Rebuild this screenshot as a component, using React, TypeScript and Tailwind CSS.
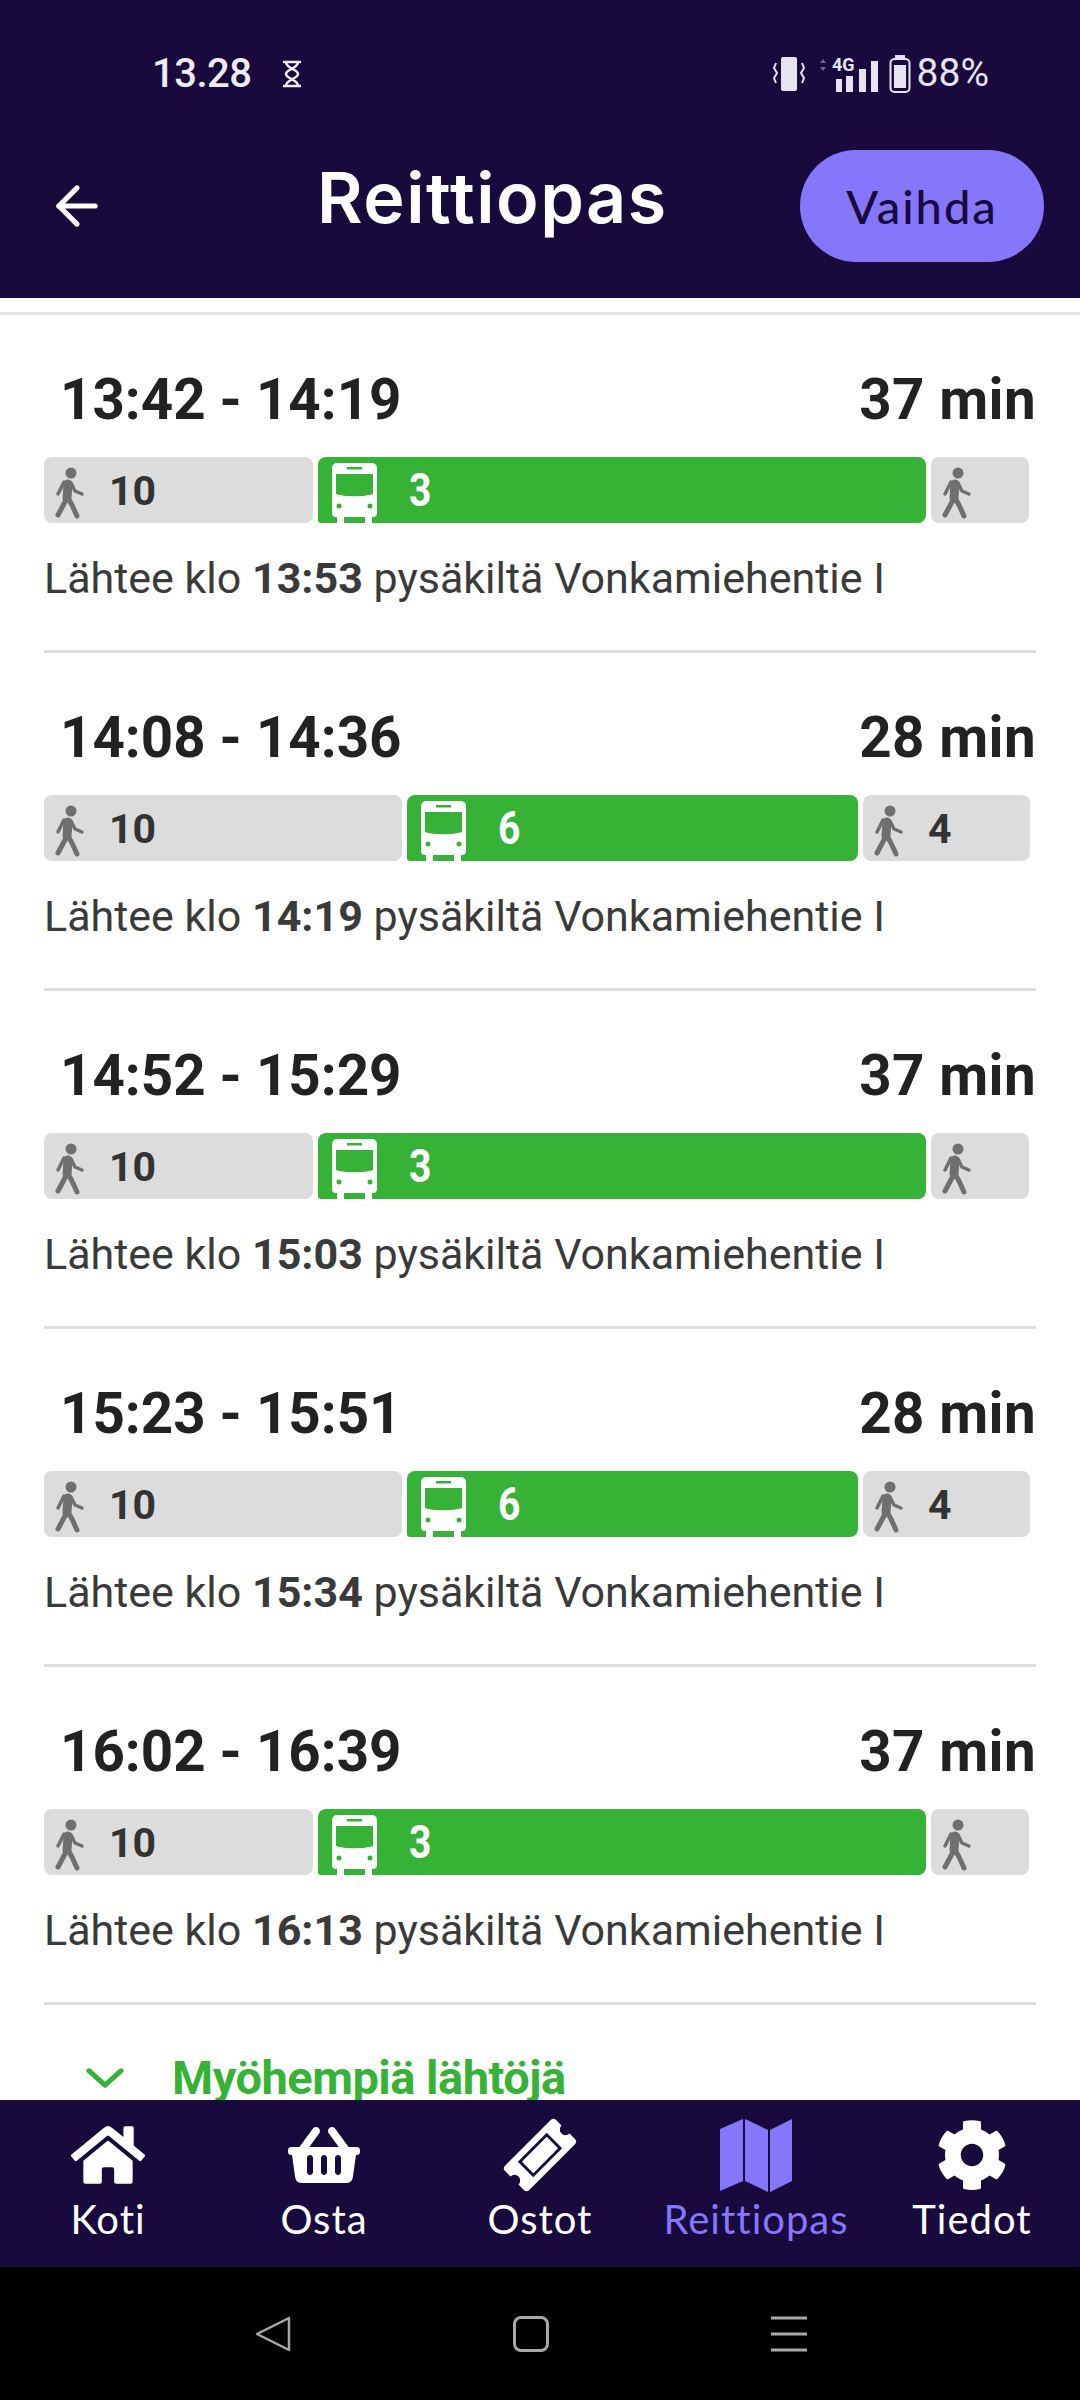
import React from "react";
import { ArrowLeft, ChevronDown } from "lucide-react";
import { FaHome, FaShoppingBasket, FaCog } from "react-icons/fa";

const routes = [
  { time: "13:42 - 14:19", dur: "37 min", dep: "13:53", line: "3", walkA: 269, bus: 608, walkB: 98, end: "" },
  { time: "14:08 - 14:36", dur: "28 min", dep: "14:19", line: "6", walkA: 358, bus: 451, walkB: 167, end: "4" },
  { time: "14:52 - 15:29", dur: "37 min", dep: "15:03", line: "3", walkA: 269, bus: 608, walkB: 98, end: "" },
  { time: "15:23 - 15:51", dur: "28 min", dep: "15:34", line: "6", walkA: 358, bus: 451, walkB: 167, end: "4" },
  { time: "16:02 - 16:39", dur: "37 min", dep: "16:13", line: "3", walkA: 269, bus: 608, walkB: 98, end: "" },
];

const BusIcon = () => (
  <svg viewBox="0 0 45 60" className="w-[45px] h-[60px] shrink-0" fill="none">
    <path d="M5 0h35a5 5 0 0 1 5 5v45a4 4 0 0 1-4 4h-1v6h-7v-6H12v6H5v-6H4a4 4 0 0 1-4-4V5a5 5 0 0 1 5-5z" fill="#fff" />
    <path d="M4 11h37v20c-8 3-29 3-37 0z" fill="#36b337" />
    <rect x="15" y="4" width="15" height="2.5" fill="#36b337" />
    <circle cx="7" cy="43" r="2.5" fill="#36b337" />
    <circle cx="38" cy="43" r="2.5" fill="#36b337" />
  </svg>
);

const WalkIcon = () => (
  <svg viewBox="0 0 60 66" className="w-[60px] h-[66px] shrink-0" fill="none" stroke="#6f6f6f" strokeLinecap="round" strokeLinejoin="round">
    <circle cx="27" cy="16" r="5.5" fill="#6f6f6f" stroke="none" />
    <path d="M24 27L23 41" strokeWidth="9" />
    <path d="M20 25L14 37" strokeWidth="3.5" />
    <path d="M27 26L31 34L38 37" strokeWidth="3.5" />
    <path d="M22 43L14 58" strokeWidth="5" />
    <path d="M24 41L28 48L33 59" strokeWidth="5" />
  </svg>
);

const TicketIcon = () => (
  <svg viewBox="0 0 80 80" className="w-[76px] h-[76px]">
    <g transform="rotate(-45 40 40)">
      <path
        d="M2 26a4 4 0 0 1 4-4h68a4 4 0 0 1 4 4v8a6 6 0 0 0 0 12v8a4 4 0 0 1-4 4H6a4 4 0 0 1-4-4v-8a6 6 0 0 0 0-12z"
        fill="#fff"
      />
      <rect x="20" y="30" width="40" height="20" fill="#fff" stroke="#180a3d" strokeWidth="3" />
    </g>
  </svg>
);

const MapIcon = () => (
  <svg viewBox="0 0 72 73" className="w-[72px] h-[73px]" fill="#8676fc">
    <path d="M0 10L23 0V62L0 72z" />
    <path d="M25 0L48 11V73L25 62z" />
    <path d="M50 11L72 0V62L50 73z" />
  </svg>
);

const WalkSegment = ({ width, label }: { width: number; label: string }) => (
  <div
    className="h-[66px] rounded-[8px] bg-[#dcdcdc] flex items-center text-[#333333] text-[41px] font-bold"
    style={{ width }}
  >
    <WalkIcon />
    {label && <span className="ml-[5px] mt-[3px] leading-none">{label}</span>}
  </div>
);

const RouteRow = ({ route }: { route: (typeof routes)[number] }) => (
  <div className="mx-[44px] pt-[51px] pb-[49px] border-b-[3px] border-[#dedede] h-[338px]">
    <div className="flex justify-between items-center h-[68px] pl-[16px] text-[56.5px] leading-[68px] font-bold text-[#222222]">
      <span>{route.time}</span>
      <span className="tracking-[0.4px]">{route.dur}</span>
    </div>
    <div className="flex gap-[5px] mt-[23px]">
      <WalkSegment width={route.walkA} label="10" />
      <div
        className="h-[66px] rounded-[8px] rounded-bl-[3px] bg-[#36b337] flex items-end pl-[14px] overflow-hidden"
        style={{ width: route.bus }}
      >
        <BusIcon />
        <span className="ml-[30px] self-center text-white text-[46px] leading-none font-bold scale-x-[0.85] -mt-[1px]">
          {route.line}
        </span>
      </div>
      <WalkSegment width={route.walkB} label={route.end} />
    </div>
    <p className="mt-[31px] text-[43px] leading-[48px] text-[#3a3a3a] whitespace-nowrap">
      Lähtee klo <b className="font-bold">{route.dep}</b> pysäkiltä Vonkamiehentie I
    </p>
  </div>
);

const navItems = [
  { label: "Koti", icon: <FaHome className="w-[74px] h-[66px]" /> },
  { label: "Osta", icon: <FaShoppingBasket className="w-[72px] h-[64px]" /> },
  { label: "Ostot", icon: <TicketIcon /> },
  { label: "Reittiopas", icon: <MapIcon />, active: true },
  { label: "Tiedot", icon: <FaCog className="w-[72px] h-[72px]" /> },
];

export default function App() {
  return (
    <div className="w-[1080px] h-[2400px] flex flex-col overflow-hidden bg-white font-['Roboto',sans-serif]">
      <header className="h-[298px] shrink-0 bg-[#180a3d] text-white flex flex-col">
        <div className="h-[147px] flex items-center justify-between pl-[152px] pr-[91px]">
          <div className="flex items-center gap-[29px] text-[#ececf2] text-[40px]">
            <span className="font-medium tracking-[-0.5px]">13.28</span>
            <svg viewBox="0 0 22 28" className="w-[22px] h-[28px]" fill="none" stroke="#ececf2" strokeWidth="2.5">
              <path d="M2 2h18M2 26h18M5 2c0 7 12 7 12 12S5 19 5 26h12c0-7-12-7-12-12S17 9 17 2z" />
            </svg>
          </div>
          <div className="flex items-center text-[#e6e4f0]">
            <svg viewBox="0 0 32 34" className="w-[32px] h-[34px]">
              <rect x="8" y="0" width="16" height="34" rx="2" fill="#e6e4f0" />
              <path d="M3 6l-2 5 3 5-3 5 2 5M29 6l2 5-3 5 3 5-2 5" stroke="#e6e4f0" strokeWidth="2" fill="none" />
            </svg>
            <svg viewBox="0 0 60 40" className="w-[60px] h-[40px] ml-[14px]">
              <path d="M4 5l3 4H1zM4 17l3-4H1z" fill="#6f6690" />
              <text x="13" y="17" fontSize="18" fontWeight="700" fill="#e6e4f0" fontFamily="Roboto">4G</text>
              <rect x="17" y="25" width="6" height="13" fill="#e6e4f0" />
              <rect x="27" y="22" width="7" height="16" fill="#e6e4f0" />
              <rect x="40" y="15" width="7" height="23" fill="#e6e4f0" />
              <rect x="52" y="7" width="7" height="31" fill="#e6e4f0" />
            </svg>
            <svg viewBox="0 0 22 40" className="w-[22px] h-[40px] ml-[10px]">
              <rect x="1.5" y="5" width="19" height="33" rx="4" fill="none" stroke="#e6e4f0" strokeWidth="2" />
              <rect x="6" y="1" width="10" height="3" fill="#e6e4f0" />
              <rect x="5" y="11" width="12" height="23" fill="#e6e4f0" />
            </svg>
            <span className="ml-[6px] text-[39px] leading-none">88%</span>
          </div>
        </div>
        <div className="flex items-center h-[112px] pl-[46px] pr-[36px] mt-[3px]">
          <ArrowLeft className="w-[62px] h-[62px] text-white shrink-0" strokeWidth={2} />
          <h1 className="flex-1 pl-[209px] text-[70px] leading-none tracking-[1.5px] font-['Inter',sans-serif] font-semibold -mt-[16px]">
            Reittiopas
          </h1>
          <button className="w-[244px] h-[112px] shrink-0 rounded-[56px] bg-[#8676fc] text-[#180a3d] text-[47px] font-['Lato',sans-serif] font-medium tracking-[2px]">
            Vaihda
          </button>
        </div>
      </header>

      <main className="flex-1 overflow-hidden">
        <div className="mt-[14px] h-[3px] bg-[#e2e2e2]" />
        {routes.map((route) => (
          <RouteRow key={route.time} route={route} />
        ))}
        <div className="flex items-center pl-[76px] mt-[44px] text-[#36b337]">
          <ChevronDown className="w-[58px] h-[58px] scale-x-[1.1]" strokeWidth={2} />
          <span className="ml-[38px] text-[47px] leading-[56px] font-bold tracking-[-0.5px]">Myöhempiä lähtöjä</span>
        </div>
      </main>

      <nav className="h-[167px] shrink-0 bg-[#180a3d] grid grid-cols-5 font-['Lato',sans-serif] text-[40px] leading-[46px] tracking-[1px]">
        {navItems.map((item) => (
          <div
            key={item.label}
            className={`flex flex-col items-center ${item.active ? "text-[#8676fc]" : "text-white"}`}
          >
            <div className="h-[96px] flex items-center justify-center pt-[14px]">{item.icon}</div>
            <span>{item.label}</span>
          </div>
        ))}
      </nav>

      <div className="h-[133px] shrink-0 bg-black flex items-center justify-center gap-[222px] pr-[18px]">
        <svg viewBox="0 0 36 36" className="w-[36px] h-[36px]" fill="none" stroke="#a8a8a8" strokeWidth="2.5" strokeLinejoin="round">
          <path d="M34 2v32L2 18z" />
        </svg>
        <div className="w-[36px] h-[36px] rounded-[8px] border-[3px] border-[#a8a8a8]" />
        <svg viewBox="0 0 36 36" className="w-[36px] h-[36px]" stroke="#a8a8a8" strokeWidth="3">
          <path d="M0 2h36M0 18h36M0 34h36" />
        </svg>
      </div>
    </div>
  );
}
